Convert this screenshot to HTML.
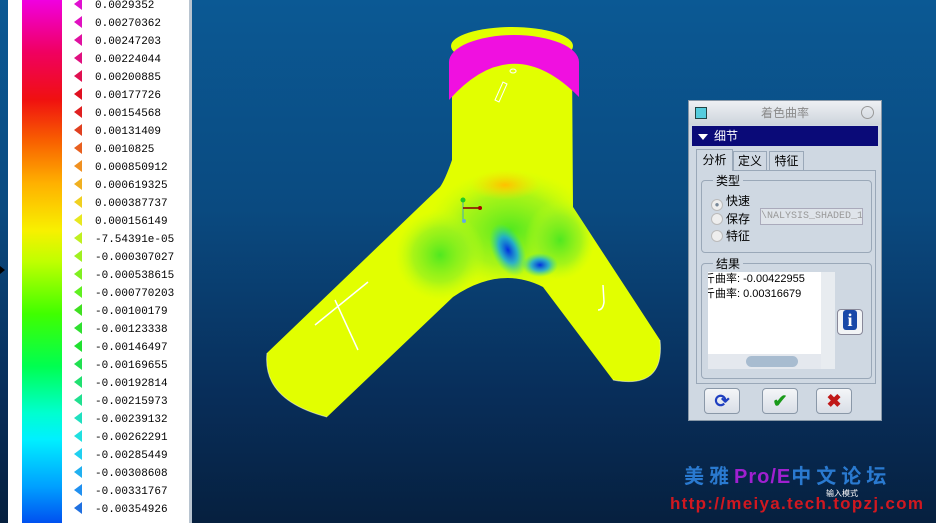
<!DOCTYPE html>
<html><head><meta charset="utf-8"><style>
*{margin:0;padding:0;box-sizing:border-box}
body{width:936px;height:523px;overflow:hidden;position:relative;background:linear-gradient(#0b5994 0%,#0a4a80 40%,#082e5a 75%,#06203f 100%);font-family:"Liberation Sans","Noto Sans CJK SC",sans-serif}
#leg{position:absolute;left:8px;top:0;width:184px;height:523px;background:#fff;border-right:3px solid #b8c4d0}
#bar{position:absolute;left:14px;top:0;width:40px;height:523px;background:linear-gradient(#f000e0 0%,#f00060 10%,#f01010 19%,#f86000 27%,#ffb000 35%,#f8f000 44%,#c0ff00 50%,#40ff00 60%,#00ff50 70%,#00ffd0 79%,#00f0ff 84%,#00a0ff 93%,#0050f0 100%)}
.r{position:absolute;left:66px;height:18px;font:11px "Liberation Mono","DejaVu Sans Mono",monospace;color:#000;line-height:18px;white-space:nowrap}
.r i{display:inline-block;width:0;height:0;border-top:6px solid transparent;border-bottom:6px solid transparent;border-right:8px solid;vertical-align:middle;margin-right:13px;margin-top:-2px}
#dlg{position:absolute;left:688px;top:100px;width:194px;height:321px;background:#cfd8e2;border:1px solid #8898a8}
.grp{position:absolute;border:1px solid #9aa8b8;border-radius:4px}
.lbl{position:absolute;font-size:12px;background:#cfd8e2;padding:0 3px}
.btn{position:absolute;top:287px;width:36px;height:26px;border:1px solid #8a98a8;border-radius:4px;background:linear-gradient(#f4f6f8,#d8dee6);font-size:18px;text-align:center;line-height:24px;font-weight:bold}
</style></head><body>
<div style="position:absolute;left:0;top:266px;width:0;height:0;border-top:4px solid transparent;border-bottom:4px solid transparent;border-left:5px solid #000"></div>
<div id="leg"><div id="bar"></div>
<div class="r" style="top:-3px"><i style="color:#e010d0"></i>0.0029352</div>
<div class="r" style="top:15px"><i style="color:#e010c0"></i>0.00270362</div>
<div class="r" style="top:33px"><i style="color:#e010a0"></i>0.00247203</div>
<div class="r" style="top:51px"><i style="color:#e01080"></i>0.00224044</div>
<div class="r" style="top:69px"><i style="color:#e01050"></i>0.00200885</div>
<div class="r" style="top:87px"><i style="color:#e01020"></i>0.00177726</div>
<div class="r" style="top:105px"><i style="color:#e02020"></i>0.00154568</div>
<div class="r" style="top:123px"><i style="color:#e04020"></i>0.00131409</div>
<div class="r" style="top:141px"><i style="color:#e86020"></i>0.0010825</div>
<div class="r" style="top:159px"><i style="color:#f09020"></i>0.000850912</div>
<div class="r" style="top:177px"><i style="color:#f0b020"></i>0.000619325</div>
<div class="r" style="top:195px"><i style="color:#f0d020"></i>0.000387737</div>
<div class="r" style="top:213px"><i style="color:#e8e820"></i>0.000156149</div>
<div class="r" style="top:231px"><i style="color:#c0f020"></i>-7.54391e-05</div>
<div class="r" style="top:249px"><i style="color:#a0f020"></i>-0.000307027</div>
<div class="r" style="top:267px"><i style="color:#80f020"></i>-0.000538615</div>
<div class="r" style="top:285px"><i style="color:#60f020"></i>-0.000770203</div>
<div class="r" style="top:303px"><i style="color:#40e020"></i>-0.00100179</div>
<div class="r" style="top:321px"><i style="color:#30e030"></i>-0.00123338</div>
<div class="r" style="top:339px"><i style="color:#20e030"></i>-0.00146497</div>
<div class="r" style="top:357px"><i style="color:#20e050"></i>-0.00169655</div>
<div class="r" style="top:375px"><i style="color:#20e070"></i>-0.00192814</div>
<div class="r" style="top:393px"><i style="color:#20e090"></i>-0.00215973</div>
<div class="r" style="top:411px"><i style="color:#20e0c0"></i>-0.00239132</div>
<div class="r" style="top:429px"><i style="color:#20e0e0"></i>-0.00262291</div>
<div class="r" style="top:447px"><i style="color:#20d0f0"></i>-0.00285449</div>
<div class="r" style="top:465px"><i style="color:#20b0f0"></i>-0.00308608</div>
<div class="r" style="top:483px"><i style="color:#2090f0"></i>-0.00331767</div>
<div class="r" style="top:501px"><i style="color:#2070e0"></i>-0.00354926</div>
</div>
<svg style="position:absolute;left:0;top:0" width="936" height="523">
<defs>
<clipPath id="c"><path d="M452 60 L452 160 Q445 180 440 187 L267 353 Q262 400 327 417 L453 297 Q500 265 543 287 L613 380 Q665 390 660 340 L573 207 L572 60 Z"/></clipPath>
<radialGradient id="g1" cx="0.5" cy="0.5" r="0.5"><stop offset="0" stop-color="#50e820"/><stop offset="0.6" stop-color="#90f020" stop-opacity=".7"/><stop offset="1" stop-color="#c0ff10" stop-opacity="0"/></radialGradient>
<radialGradient id="g2" cx="0.5" cy="0.5" r="0.5"><stop offset="0" stop-color="#0030e0"/><stop offset="0.5" stop-color="#10a0f0" stop-opacity=".8"/><stop offset="1" stop-color="#20e0a0" stop-opacity="0"/></radialGradient>
<radialGradient id="g3" cx="0.5" cy="0.5" r="0.5"><stop offset="0" stop-color="#ffc000"/><stop offset="1" stop-color="#ffe000" stop-opacity="0"/></radialGradient>
</defs>
<g clip-path="url(#c)">
<rect x="260" y="30" width="410" height="400" fill="#e2ff00"/>
<ellipse cx="510" cy="230" rx="85" ry="60" fill="url(#g1)"/>
<ellipse cx="440" cy="255" rx="45" ry="45" fill="url(#g1)"/>
<ellipse cx="560" cy="240" rx="35" ry="40" fill="url(#g1)"/>
<ellipse cx="505" cy="185" rx="35" ry="15" fill="url(#g3)"/>
<ellipse cx="508" cy="250" rx="16" ry="28" fill="url(#g2)" transform="rotate(-25 508 250)"/>
<ellipse cx="540" cy="265" rx="18" ry="12" fill="url(#g2)"/>
</g>
<ellipse cx="512" cy="46" rx="61" ry="19" fill="#e2ff00"/>
<path d="M449 62 A65 27 0 0 1 579 62 L579 97 Q512 29 449 100 Z" fill="#f010e0"/>
<path d="M327 417 Q262 400 267 353" stroke="#fff" stroke-width="1" fill="none" opacity=".5"/>
<path d="M613 380 Q665 390 660 340" stroke="#fff" stroke-width="1" fill="none" opacity=".5"/>
<path d="M495 100 L503 82 L507 84 L499 102 Z M513 69 a3 2 0 1 0 0.1 0" stroke="#fff" stroke-width="1" fill="none"/>
<path d="M335 300 L358 350 M315 325 L368 282" stroke="#fff" stroke-width="1.5" fill="none"/>
<path d="M603 285 L604 302 Q603 310 598 310" stroke="#fff" stroke-width="1.5" fill="none"/>
<line x1="463" y1="200" x2="463" y2="220" stroke="#4ab" stroke-width="1"/>
<line x1="463" y1="208" x2="480" y2="208" stroke="#800" stroke-width="1.5"/>
<circle cx="463" cy="200" r="2.5" fill="#2c2"/><circle cx="480" cy="208" r="2" fill="#a00"/><circle cx="464" cy="221" r="2" fill="#6ad"/>
</svg>
<div id="dlg">
<div style="position:absolute;left:0;top:0;width:192px;height:24px;background:linear-gradient(#eef0f4,#cdd4dc);font-size:12px;color:#8a8a8a;text-align:center;line-height:24px">着色曲率</div>
<div style="position:absolute;left:6px;top:6px;width:12px;height:12px;background:#5cd;border:1px solid #244"></div>
<div style="position:absolute;left:172px;top:5px;width:13px;height:13px;border:1px solid #999;border-radius:50%"></div>
<div style="position:absolute;left:3px;top:25px;width:186px;height:20px;background:#0a0a78;color:#fff;font-size:12px;line-height:20px;padding-left:22px">细节</div>
<div style="position:absolute;left:9px;top:33px;width:0;height:0;border-left:5px solid transparent;border-right:5px solid transparent;border-top:6px solid #fff"></div>
<div style="position:absolute;left:7px;top:48px;width:37px;height:22px;border:1px solid #9aa8b8;border-bottom:none;font-size:12px;line-height:20px;text-align:center;background:#cfd8e2;z-index:2">分析</div>
<div style="position:absolute;left:44px;top:50px;width:34px;height:20px;border:1px solid #9aa8b8;font-size:12px;line-height:18px;text-align:center">定义</div>
<div style="position:absolute;left:80px;top:50px;width:35px;height:20px;border:1px solid #9aa8b8;font-size:12px;line-height:18px;text-align:center">特征</div>
<div style="position:absolute;left:7px;top:69px;width:180px;height:214px;border:1px solid #9aa8b8"></div>
<div class="grp" style="left:12px;top:79px;width:171px;height:73px"></div>
<div class="lbl" style="left:24px;top:71px">类型</div>
<div style="position:absolute;left:22px;top:92px;font-size:12px;line-height:17px">
<div><span style="display:inline-block;width:12px;height:12px;border-radius:50%;background:#eee;border:1px solid #bbb;vertical-align:-2px;margin-right:3px;text-align:center;font-size:8px;line-height:10px;color:#789">●</span>快速</div>
<div><span style="display:inline-block;width:12px;height:12px;border-radius:50%;background:#eee;border:1px solid #bbb;vertical-align:-2px;margin-right:3px"></span>保存</div>
<div><span style="display:inline-block;width:12px;height:12px;border-radius:50%;background:#eee;border:1px solid #bbb;vertical-align:-2px;margin-right:3px"></span>特征</div></div>
<div style="position:absolute;left:71px;top:107px;width:103px;height:17px;border:1px solid #aab;background:#dfe4ea;font:10px 'Liberation Mono',monospace;color:#999;line-height:15px;overflow:hidden;white-space:nowrap">\NALYSIS_SHADED_1</div>
<div class="grp" style="left:12px;top:162px;width:171px;height:116px"></div>
<div class="lbl" style="left:24px;top:154px">结果</div>
<div style="position:absolute;left:19px;top:171px;width:127px;height:97px;background:#fff;font-size:11px;line-height:15px;overflow:hidden;white-space:nowrap">
<div style="margin-left:-4px">斤曲率: -0.00422955</div><div style="margin-left:-4px">斤曲率: 0.00316679</div>
<div style="position:absolute;left:0;bottom:0;width:127px;height:15px;background:#e4e8ee"></div>
<div style="position:absolute;left:38px;bottom:2px;width:52px;height:11px;border-radius:6px;background:#a8bcd0"></div>
<div style="position:absolute;right:0;top:0;width:14px;height:97px;background:#e8ecf0"></div></div>
<div style="position:absolute;left:148px;top:208px;width:26px;height:26px;border:1px solid #889;border-radius:4px;background:#f2f4f6;text-align:center;line-height:22px;font:bold 18px 'Liberation Serif',serif;color:#fff"><span style="display:inline-block;width:14px;height:20px;background:#1848a8;border-radius:3px;line-height:20px">i</span></div>
<div class="btn" style="left:15px;color:#2040c0">⟳</div>
<div class="btn" style="left:73px;color:#1a9a1a">✔</div>
<div class="btn" style="left:127px;color:#c01818">✖</div>
</div>
<div style="position:absolute;left:684px;top:460px;font:bold 20px 'Noto Sans CJK SC',sans-serif;color:#2a7ad0;letter-spacing:5px;white-space:nowrap">美雅<span style="color:#a020d0;font-family:'Liberation Sans';letter-spacing:1px">Pro/E</span>中文论坛</div>
<div style="position:absolute;left:826px;top:488px;font-size:8px;color:#fff">输入模式</div>
<div style="position:absolute;left:670px;top:494px;font:bold 17px 'Liberation Sans',sans-serif;color:#d01820;letter-spacing:1.3px;white-space:nowrap">http://meiya.tech.topzj.com</div>
</body></html>
